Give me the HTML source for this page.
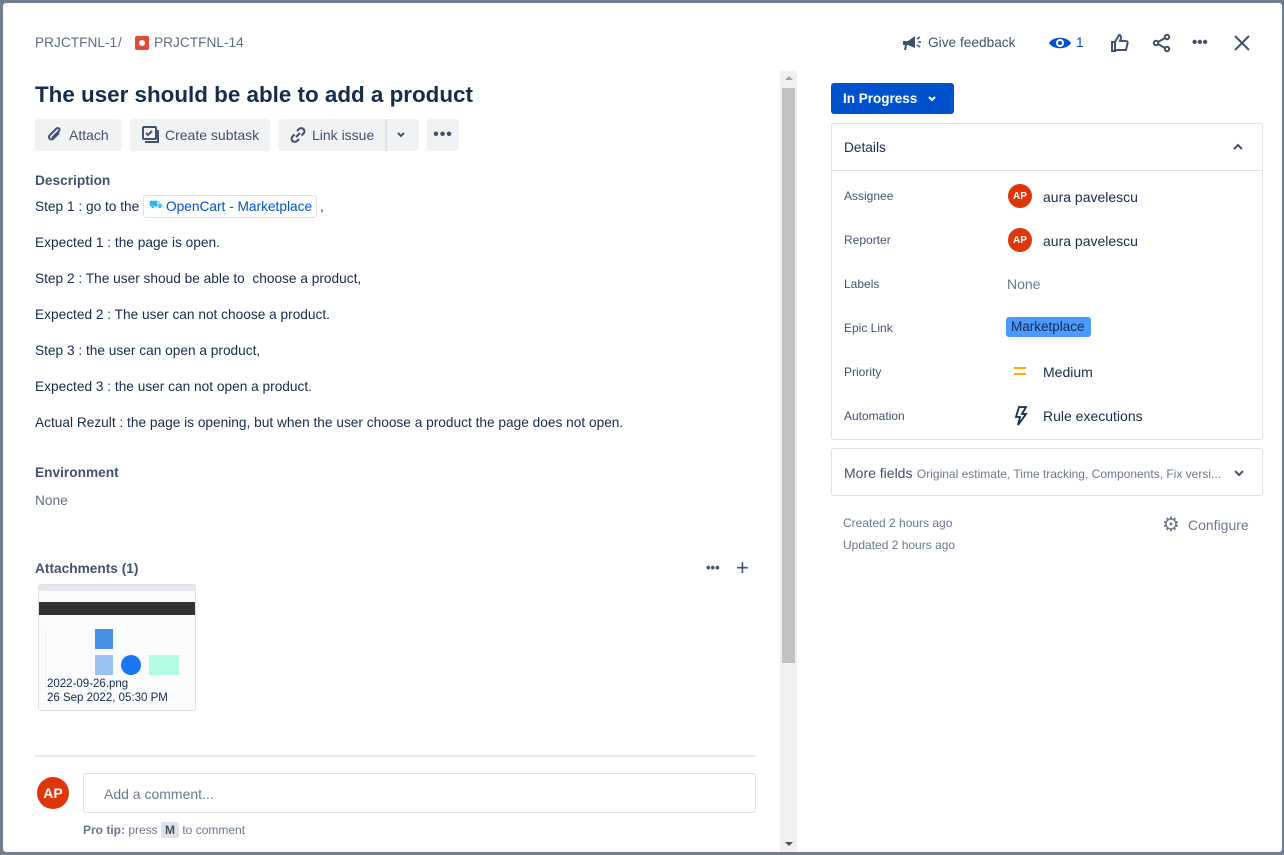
<!DOCTYPE html>
<html><head><meta charset="utf-8"><style>
*{box-sizing:border-box;margin:0;padding:0}
body{width:1284px;height:855px;background:#727d90;font-family:"Liberation Sans",sans-serif;color:#172b4d;position:relative;overflow:hidden}
.modal{position:absolute;left:3px;top:3px;width:1279px;height:849px;background:#fff;border-radius:3px}
.a{position:absolute}
.t{font-size:13.7px;color:#172b4d;white-space:nowrap}
.g{color:#5e6c84}
.btn{position:absolute;top:119px;height:32px;background:#f1f2f4;border-radius:3px;font-size:14px;color:#42526e;display:flex;align-items:center}
.lbl{position:absolute;left:844px;font-size:12px;color:#42526e}
.av{position:absolute;width:24px;height:24px;border-radius:50%;background:#de350b;color:#fff;font-size:10px;font-weight:bold;display:flex;align-items:center;justify-content:center}
.val{position:absolute;left:1043px;font-size:14px;color:#172b4d}
</style></head><body>
<div class="modal"></div>
<div class="a t g" style="left:35px;top:35px">PRJCTFNL-1</div>
<div class="a t g" style="left:118px;top:35px">/</div>
<div class="a" style="left:135px;top:36px;width:14px;height:14px;background:#e5493a;border-radius:2px"><div style="position:absolute;left:4px;top:4px;width:6px;height:6px;border-radius:50%;background:#fff"></div></div>
<div class="a t g" style="left:154px;top:35px">PRJCTFNL-14</div>
<div class="a" style="left:35px;top:82px;font-size:22.4px;font-weight:bold;color:#172b4d">The user should be able to add a product</div>
<div class="btn" style="left:35px;width:87px;padding-left:10px"><svg width="20" height="20" viewBox="0 0 20 20" fill="none" stroke="#42526e" stroke-width="2"><path d="M14 8l-6 6a2.5 2.5 0 0 1-3.5-3.5l7-7a1.7 1.7 0 0 1 2.5 2.5l-7 7"/></svg><span style="margin-left:4px">Attach</span></div>
<div class="btn" style="left:130px;width:140px;padding-left:10px"><svg width="20" height="20" viewBox="0 0 20 20" fill="none" stroke="#42526e" stroke-width="2"><rect x="3" y="2" width="13" height="12" rx="1"/><path d="M6 8l2 2 4-4M5 17h13V5"/></svg><span style="margin-left:5px">Create subtask</span></div>
<div class="btn" style="left:278px;width:141px;padding-left:10px"><svg width="20" height="20" viewBox="0 0 20 20" fill="none" stroke="#42526e" stroke-width="2"><path d="M8 12l4-4M9 6l2-2a3 3 0 0 1 4.5 4.5l-2 2M11 14l-2 2a3 3 0 0 1-4.5-4.5l2-2"/></svg><span style="margin-left:4px">Link issue</span><div style="position:absolute;left:107px;top:0;width:2px;height:32px;background:#dfe1e6"></div><svg style="position:absolute;left:118px;top:12px" width="10" height="8" viewBox="0 0 10 8" fill="none" stroke="#42526e" stroke-width="2"><path d="M2 2l3 3 3-3"/></svg></div>
<div class="btn" style="left:427px;width:32px;justify-content:center;font-size:16px;font-weight:bold;letter-spacing:1px">•••</div>
<div class="a t" style="left:35px;top:173px;font-weight:bold;color:#42526e">Description</div>
<div class="a t" style="left:35px;top:199px">Step 1 : go to the</div>
<div class="a" style="left:143px;top:195px;width:174px;height:23px;border:1px solid #dfe1e6;border-radius:3px;font-size:13.7px;color:#0052cc;padding:3px 0 0 22px;white-space:nowrap">OpenCart - Marketplace<span style="position:absolute;left:5px;top:3px;color:#2ab6e8;font-size:11px">⛟</span></div>
<div class="a t" style="left:320px;top:199px">,</div>
<div class="a t" style="left:35px;top:235px">Expected 1 : the page is open.</div>
<div class="a t" style="left:35px;top:271px">Step 2 : The user shoud be able to &nbsp;choose a product,</div>
<div class="a t" style="left:35px;top:307px">Expected 2 : The user can not choose a product.</div>
<div class="a t" style="left:35px;top:343px">Step 3 : the user can open a product,</div>
<div class="a t" style="left:35px;top:379px">Expected 3 : the user can not open a product.</div>
<div class="a t" style="left:35px;top:415px">Actual Rezult : the page is opening, but when the user choose a product the page does not open.</div>
<div class="a t" style="left:35px;top:465px;font-weight:bold;color:#42526e">Environment</div>
<div class="a t g" style="left:35px;top:493px">None</div>
<div class="a t" style="left:35px;top:561px;font-weight:bold;color:#42526e">Attachments (1)</div>
<div class="a" style="left:706px;top:560px;font-size:13px;color:#42526e;font-weight:bold">•••</div>
<div class="a" style="left:736px;top:555px;font-size:22px;color:#42526e">+</div>
<div class="a" style="left:38px;top:584px;width:158px;height:127px;border:1px solid #dfe1e6;border-radius:3px;overflow:hidden;background:#fafbfc">
 <div style="position:absolute;left:0;top:0;width:158px;height:6px;background:#e4e6ee"></div>
 <div style="position:absolute;left:0;top:17px;width:158px;height:13px;background:#333"></div>
 <div style="position:absolute;left:6px;top:45px;width:30px;height:60px;border-left:1px solid #eee"></div>
 <div style="position:absolute;left:56px;top:44px;width:18px;height:20px;background:#4a90e2"></div>
 <div style="position:absolute;left:56px;top:70px;width:18px;height:20px;background:#9bc3f0"></div>
 <div style="position:absolute;left:82px;top:70px;width:20px;height:20px;border-radius:50%;background:#1877f2"></div>
 <div style="position:absolute;left:110px;top:70px;width:30px;height:20px;background:#b2fce4"></div>
 <div style="position:absolute;left:8px;top:93px;font-size:11.5px;color:#172b4d">2022-09-26.png</div>
 <div style="position:absolute;left:8px;top:107px;font-size:11.5px;color:#172b4d">26 Sep 2022, 05:30 PM</div>
</div>
<div class="a" style="left:35px;top:755px;width:721px;height:2px;background:#ebecf0"></div>
<div class="av" style="left:37px;top:777px;width:32px;height:32px;font-size:14px">AP</div>
<div class="a" style="left:83px;top:773px;width:673px;height:40px;border:1px solid #dfe1e6;border-radius:3px;font-size:14px;color:#6b778c;padding:12px 0 0 20px">Add a comment...</div>
<div class="a" style="left:83px;top:823px;font-size:12px;color:#6b778c"><b>Pro tip:</b> press <span style="background:#dfe1e6;padding:1px 4px;border-radius:2px;font-weight:bold;color:#42526e">M</span> to comment</div>
<div class="a" style="left:780px;top:71px;width:17px;height:781px;background:#f1f1f1"></div>
<div class="a" style="left:782px;top:88px;width:13px;height:575px;background:#c1c1c1"></div>
<div class="a" style="left:785px;top:76px;width:0;height:0;border-left:4px solid transparent;border-right:4px solid transparent;border-bottom:4px solid #a3a3a3"></div>
<div class="a" style="left:785px;top:842px;width:0;height:0;border-left:4px solid transparent;border-right:4px solid transparent;border-top:4px solid #505050"></div>
<svg class="a" style="left:901px;top:33px" width="22" height="20" viewBox="0 0 22 20"><path d="M2 8h5l7-5v12l-7-3H2z" fill="#42526e"/><path d="M5 12l-1 5" stroke="#42526e" stroke-width="2"/><path d="M16 6l3-2M17 9h3M16 12l3 2" stroke="#42526e" stroke-width="1.5"/></svg>
<div class="a t" style="left:928px;top:35px;color:#42526e">Give feedback</div>
<svg class="a" style="left:1048px;top:33px" width="24" height="20" viewBox="0 0 24 20"><path d="M1 10C5 3 19 3 23 10C19 17 5 17 1 10z" fill="#0052cc"/><circle cx="12" cy="10" r="4" fill="#fff"/><circle cx="12" cy="10" r="2" fill="#0052cc"/></svg>
<div class="a t" style="left:1076px;top:35px;color:#0052cc">1</div>
<svg class="a" style="left:1110px;top:33px" width="20" height="20" viewBox="0 0 20 20" fill="none" stroke="#42526e" stroke-width="2"><path d="M2 9h3v9H2zM5 9l4-7c2 0 2 2 2 3l-1 3h6c1 0 2 1 1.5 2.5L16 17H5"/></svg>
<svg class="a" style="left:1152px;top:33px" width="20" height="20" viewBox="0 0 20 20" fill="none" stroke="#42526e" stroke-width="2"><circle cx="15" cy="4" r="2.2"/><circle cx="4" cy="10" r="2.2"/><circle cx="15" cy="16" r="2.2"/><path d="M6 9l7-4M6 11l7 4"/></svg>
<div class="a" style="left:1192px;top:34px;font-size:15px;color:#42526e;font-weight:bold">•••</div>
<svg class="a" style="left:1233px;top:34px" width="18" height="18" viewBox="0 0 18 18" stroke="#42526e" stroke-width="2"><path d="M2 2l14 14M16 2L2 16"/></svg>
<div class="a" style="left:831px;top:83px;width:123px;height:31px;background:#0052cc;border-radius:3px;color:#fff;font-size:13.5px;font-weight:bold;padding:8px 0 0 12px">In Progress <svg style="margin-left:6px" width="10" height="8" viewBox="0 0 10 8" fill="none" stroke="#fff" stroke-width="2"><path d="M2 2l3 3 3-3"/></svg></div>
<div class="a" style="left:831px;top:123px;width:432px;height:317px;border:1px solid #dfe1e6;border-radius:3px"></div>
<div class="a" style="left:831px;top:170px;width:432px;height:1px;background:#dfe1e6"></div>
<div class="a t" style="left:844px;top:140px;color:#172b4d">Details</div>
<svg class="a" style="left:1232px;top:142px" width="12" height="10" viewBox="0 0 12 10" fill="none" stroke="#42526e" stroke-width="2"><path d="M2 7l4-4 4 4"/></svg>
<div class="lbl" style="top:189px">Assignee</div>
<div class="av" style="left:1008px;top:184px">AP</div><div class="val" style="top:189px">aura pavelescu</div>
<div class="lbl" style="top:233px">Reporter</div>
<div class="av" style="left:1008px;top:228px">AP</div><div class="val" style="top:233px">aura pavelescu</div>
<div class="lbl" style="top:277px">Labels</div>
<div class="val" style="left:1007px;top:276px;color:#6b778c">None</div>
<div class="lbl" style="top:321px">Epic Link</div>
<div class="a" style="left:1006px;top:317px;width:85px;height:20px;background:#4c9aff;border-radius:3px;font-size:13.5px;color:#172b4d;padding:2px 0 0 5px">Marketplace</div>
<div class="lbl" style="top:365px">Priority</div>
<div class="a" style="left:1014px;top:367px;width:12px;height:2px;background:#ffab00"></div>
<div class="a" style="left:1014px;top:373px;width:12px;height:2px;background:#ffab00"></div>
<div class="val" style="top:364px">Medium</div>
<div class="lbl" style="top:409px">Automation</div>
<svg class="a" style="left:1013px;top:405px" width="16" height="22" viewBox="0 0 16 22" fill="none" stroke="#172b4d" stroke-width="1.8"><path d="M6 2h7l-4 7h4L5 20l2-8H3z"/></svg>
<div class="val" style="top:408px">Rule executions</div>
<div class="a" style="left:831px;top:448px;width:432px;height:48px;border:1px solid #dfe1e6;border-radius:3px"></div>
<div class="a" style="left:844px;top:465px;white-space:nowrap"><span style="font-size:14px;color:#42526e">More fields</span> <span style="font-size:12px;color:#6b778c">Original estimate, Time tracking, Components, Fix versi...</span></div>
<svg class="a" style="left:1233px;top:468px" width="12" height="10" viewBox="0 0 12 10" fill="none" stroke="#42526e" stroke-width="2"><path d="M2 3l4 4 4-4"/></svg>
<div class="a" style="left:843px;top:516px;font-size:12px;color:#6b778c">Created 2 hours ago</div>
<div class="a" style="left:843px;top:538px;font-size:12px;color:#6b778c">Updated 2 hours ago</div>
<div class="a" style="left:1162px;top:512px;font-size:20px;color:#6b778c">⚙</div>
<div class="a" style="left:1188px;top:517px;font-size:14px;color:#6b778c">Configure</div>
</body></html>
